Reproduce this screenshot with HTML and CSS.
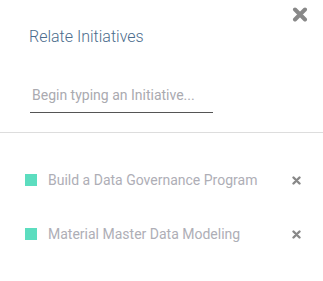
FILE: index.html
```html
<!DOCTYPE html>
<html lang="en">
<head>
    <meta charset="UTF-8">
    <title>Relate Initiatives</title>
    <link rel="stylesheet" href="styles.css">
</head>
<body>
    <div class="panel">
        <button class="close-btn" aria-label="Close">
            <svg width="16" height="15" viewBox="0 0 16 15"><path d="M3 2.5 L13 12.5 M13 2.5 L3 12.5" stroke="#888" stroke-width="4" stroke-linecap="round"/></svg>
        </button>
        <div class="panel-head">
            <h2 class="title">Relate Initiatives</h2>
            <input class="search" type="text" placeholder="Begin typing an Initiative...">
        </div>
        <ul class="items">
            <li class="item">
                <span class="swatch"></span>
                <span class="name">Build a Data Governance Program</span>
                <span class="remove"><svg width="9" height="9" viewBox="0 0 9 9"><path d="M1.5 1.5 L7.5 7.5 M7.5 1.5 L1.5 7.5" stroke="#888" stroke-width="2.4" stroke-linecap="round"/></svg></span>
            </li>
            <li class="item">
                <span class="swatch"></span>
                <span class="name">Material Master Data Modeling</span>
                <span class="remove"><svg width="9" height="9" viewBox="0 0 9 9"><path d="M1.5 1.5 L7.5 7.5 M7.5 1.5 L1.5 7.5" stroke="#888" stroke-width="2.4" stroke-linecap="round"/></svg></span>
            </li>
        </ul>
    </div>
</body>
</html>
```

FILE: styles.css
```css
body {
    margin: 0;
    background-color: #FFFFFF;
    font-family: Roboto, "Liberation Sans", sans-serif;
}
.panel {
    position: relative;
    width: 323px;
    height: 281px;
}
.close-btn {
    position: absolute;
    top: 7px;
    left: 292px;
    padding: 0;
    border: none;
    background: none;
    line-height: 0;
    cursor: pointer;
}
.panel-head {
    padding: 27px 0 0 29px;
    height: 133px;
    border-bottom: 1px solid #DDDDDD;
    box-sizing: border-box;
}
.title {
    margin: 0;
    font-size: 16px;
    font-weight: 300;
    color: #4B6C8C;
    line-height: 20px;
}
.search {
    display: block;
    margin: 40px 0 0 1px;
    width: 183px;
    padding: 0 0 8px 2px;
    border: none;
    border-bottom: 1px solid #555555;
    font-family: inherit;
    font-size: 14px;
    line-height: 17px;
    color: #333;
    outline: none;
    box-sizing: border-box;
}
.search::placeholder {
    color: #AAAAB0;
}
.items {
    list-style: none;
    margin: 0;
    padding: 37px 0 0 25px;
}
.item {
    display: flex;
    align-items: center;
    height: 20px;
    margin-bottom: 34px;
}
.swatch {
    width: 12px;
    height: 12px;
    background-color: #5CDDBF;
    flex: none;
}
.name {
    margin-left: 11px;
    font-size: 14px;
    color: #AEAEB6;
    flex: 1;
}
.remove {
    width: 9px;
    line-height: 0;
    margin-right: 22px;
}
```
